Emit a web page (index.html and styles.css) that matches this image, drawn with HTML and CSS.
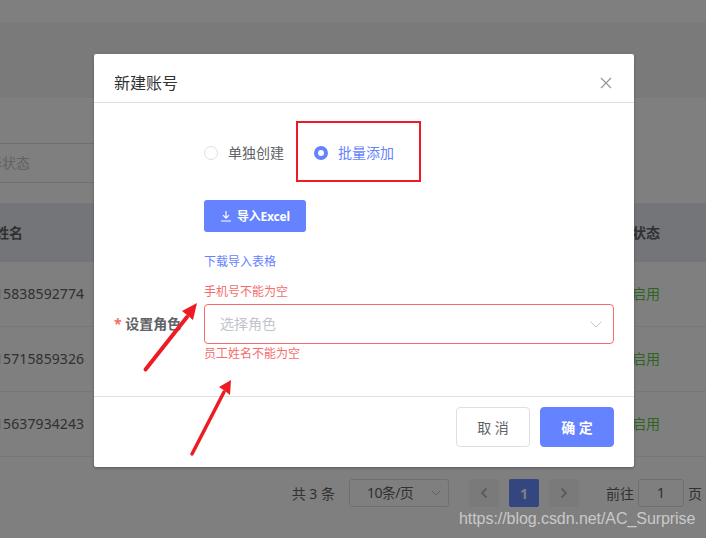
FILE: index.html
```html
<!DOCTYPE html>
<html>
<head>
    <title>新建账号</title>
    <link rel="stylesheet" href="styles.css">
</head>
<body>
    <div class="page">
        <div class="band"></div>
        <div class="filter">选择状态</div>
        <div class="row head"><span class="name">姓名</span><span>状态</span></div>
        <div class="row"><span class="phone">15838592774</span><span class="on">启用</span></div>
        <div class="row"><span class="phone">15715859326</span><span class="on">启用</span></div>
        <div class="row"><span class="phone">15637934243</span><span class="on">启用</span></div>
        <div class="pager">
            <span class="total">共 3 条</span>
            <div class="size">10条/页
                <svg class="size-arrow" width="10" height="6" viewBox="0 0 10 6"><path d="M1 1l4 4 4-4" fill="none" stroke="currentColor"/></svg>
            </div>
            <div class="nav">
                <svg width="8" height="12" viewBox="0 0 8 12"><path d="M6.5 1.500L2 6l4.500 4.500" fill="none" stroke="currentColor" stroke-width="2"/></svg>
            </div>
            <div class="num">1</div>
            <div class="nav">
                <svg width="8" height="12" viewBox="0 0 8 12"><path d="M1.500 1.500L6 6l-4.500 4.500" fill="none" stroke="currentColor" stroke-width="2"/></svg>
            </div>
            <div class="jump">前往<div class="jump-input">1</div>页</div>
        </div>
    </div>

    <div class="mask">
        <div class="modal">
            <div class="modal-head">
                <span class="title">新建账号</span>
                <svg class="close" width="12" height="12" viewBox="0 0 12 12"><path d="M1 1l10 10M11 1L1 11" fill="none" stroke="currentColor" stroke-width="1.100"/></svg>
            </div>
            <div class="modal-body">
                <div class="radios">
                    <label class="radio"><i class="dot"></i><span>单独创建</span></label>
                    <label class="radio checked"><i class="dot"></i><span>批量添加</span></label>
                </div>
                <button class="import">
                    <svg width="10" height="11" viewBox="0 0 10 11"><path d="M5 0v6.500M2 4.200l3 3 3-3M0 10h10" fill="none" stroke="currentColor" stroke-width="1.200"/></svg>
                    导入Excel
                </button>
                <a class="link">下载导入表格</a>
                <p class="error first">手机号不能为空</p>
                <div class="form-row">
                    <span class="label"><em>*</em> 设置角色</span>
                    <div class="select">选择角色
                        <svg class="chevron" width="12" height="7" viewBox="0 0 12 7"><path d="M.5.5L6 6 11.500.5" fill="none" stroke="currentColor"/></svg>
                    </div>
                </div>
                <p class="error last">员工姓名不能为空</p>
            </div>
            <div class="modal-foot">
                <button class="btn">取 消</button>
                <button class="btn primary">确 定</button>
            </div>
        </div>
    </div>

    <div class="mark-box"></div>
    <svg class="arrows" width="706" height="538" viewBox="0 0 706 538">
        <path d="M145.500 369.500L187 317" stroke="#ed1c24" stroke-width="4" stroke-linecap="round"/>
        <path d="M197 303L182 311 187 315 193 320z" fill="#ed1c24"/>
        <path d="M192 454L224 392" stroke="#ed1c24" stroke-width="3.500" stroke-linecap="round"/>
        <path d="M231 380L219 387 225 391 230 395z" fill="#ed1c24"/>
    </svg>
    <div class="watermark">https://blog.csdn.net/AC_Surprise</div>
</body>
</html>
```

FILE: styles.css
```css
* {
    box-sizing: border-box;
}
body {
    margin: 0;
    font-family: "Noto Sans", "Noto Sans CJK SC", sans-serif;
    font-size: 14px;
    color: #606266;
}
.page {
    height: 538px;
    padding-top: 22px;
    overflow: hidden;
    background: #fff;
}
.band {
    height: 76px;
    background: #f4f4f5;
}
.filter {
    width: 220px;
    height: 40px;
    margin: 45px 0 20px -26px;
    border: 1px solid #dcdfe6;
    border-width: 1px 1px 1px 0;
    line-height: 38px;
    color: #c0c4cc;
}
.row {
    display: flex;
    justify-content: space-between;
    align-items: center;
    height: 65px;
    margin-left: -5px;
    padding: 0 46px 2px 0;
    border-bottom: 1px solid #ebeef5;
}
.head {
    height: 59px;
    font-weight: bold;
    background: #e8ebf0;
    border-bottom: none;
}
.phone {
    letter-spacing: .1px;
}
.on {
    color: #5fc94a;
}
.pager {
    display: flex;
    align-items: center;
    justify-content: flex-end;
    height: 28px;
    margin-top: 22px;
    padding-right: 4px;
}
.total {
    margin-right: 14px;
}
.size {
    position: relative;
    width: 100px;
    height: 28px;
    margin-right: 20px;
    padding-left: 17px;
    border: 1px solid #dcdfe6;
    border-radius: 3px;
    line-height: 26px;
    letter-spacing: -.6px;
}
.size-arrow {
    position: absolute;
    right: 7px;
    top: 10px;
    color: #c0c4cc;
}
.nav, .num {
    display: flex;
    align-items: center;
    justify-content: center;
    width: 30px;
    height: 28px;
    border-radius: 2px;
    background: #f4f4f5;
    color: #b4b8c0;
}
.num {
    margin: 0 10px;
    background: #688cff;
    color: #fff;
    font-weight: bold;
}
.jump {
    display: flex;
    align-items: center;
    margin-left: 27px;
}
.jump-input {
    width: 46px;
    height: 28px;
    margin: 0 4px;
    border: 1px solid #dcdfe6;
    border-radius: 3px;
    text-align: center;
    line-height: 26px;
}

.mask {
    position: absolute;
    left: 0;
    top: 0;
    width: 706px;
    height: 538px;
    padding: 54px 0 0 94px;
    background: rgba(0, 0, 0, .5);
}
.modal {
    width: 540px;
    height: 413px;
    display: flex;
    flex-direction: column;
    background: #fff;
    border-radius: 2px;
    box-shadow: 0 1px 3px rgba(0, 0, 0, .3);
}
.modal-head {
    display: flex;
    align-items: center;
    justify-content: space-between;
    height: 49px;
    padding: 7px 22px 0 20px;
    border-bottom: 1px solid #e0e0e0;
}
.title {
    font-size: 16px;
    color: #303133;
}
.close {
    margin-top: 2px;
    color: #909399;
}
.modal-body {
    flex: 1;
    padding: 30px 20px 0 20px;
}
.radios, .import, .link, .error {
    margin-left: 90px;
}
.radios {
    display: flex;
    align-items: center;
    gap: 30px;
    height: 40px;
}
.radio {
    display: flex;
    align-items: center;
    gap: 10px;
}
.radio span {
    padding-bottom: 2px;
}
.dot {
    width: 14px;
    height: 14px;
    border: 1px solid #dcdfe6;
    border-radius: 50%;
}
.checked {
    color: #6582ff;
}
.checked .dot {
    border: 4.5px solid #6582ff;
}
.import {
    display: flex;
    align-items: center;
    gap: 6px;
    width: 102px;
    height: 32px;
    margin-top: 27px;
    padding: 0 0 0 17px;
    border: none;
    border-radius: 3px;
    background: #6582ff;
    color: #fff;
    font: bold 12px "Noto Sans", "Noto Sans CJK SC", sans-serif;
    letter-spacing: -.2px;
}
.link {
    display: block;
    margin-top: 20px;
    font-size: 12px;
    line-height: 20px;
    color: #6582ff;
}
.error {
    margin-top: 0;
    margin-bottom: 0;
    font-size: 12px;
    line-height: 18px;
    color: #f56c6c;
}
.first {
    margin-top: 11px;
    margin-bottom: 3px;
}
.last {
    margin-top: 1px;
}
.form-row {
    display: flex;
    align-items: center;
}
.label {
    width: 90px;
    padding-bottom: 2px;
    font-weight: bold;
    white-space: nowrap;
}
.label em {
    color: #f56c6c;
    font-style: normal;
}
.select {
    position: relative;
    flex: 1;
    height: 40px;
    padding-left: 15px;
    border: 1px solid #f56c6c;
    border-radius: 4px;
    line-height: 38px;
    color: #c0c4cc;
}
.chevron {
    position: absolute;
    right: 11px;
    top: 16px;
}
.modal-foot {
    display: flex;
    justify-content: flex-end;
    gap: 10px;
    height: 71px;
    padding: 10px 20px 0 0;
    border-top: 1px solid #e0e0e0;
}
.btn {
    width: 74px;
    height: 40px;
    padding-bottom: 2px;
    border: 1px solid #dcdfe6;
    border-radius: 4px;
    background: #fff;
    color: #606266;
    font: 14px "Noto Sans", "Noto Sans CJK SC", sans-serif;
}
.primary {
    border-color: #6582ff;
    background: #6582ff;
    color: #fff;
    font-weight: bold;
}

.mark-box {
    position: absolute;
    left: 296px;
    top: 121px;
    width: 125px;
    height: 61px;
    border: 2px solid #ed1c24;
}
.arrows {
    position: absolute;
    left: 0;
    top: 0;
}
.watermark {
    position: absolute;
    left: 459px;
    top: 509px;
    font-family: "Liberation Sans", sans-serif;
    font-size: 16px;
    line-height: 20px;
    letter-spacing: -.06px;
    color: #c9c9c9;
}
```
